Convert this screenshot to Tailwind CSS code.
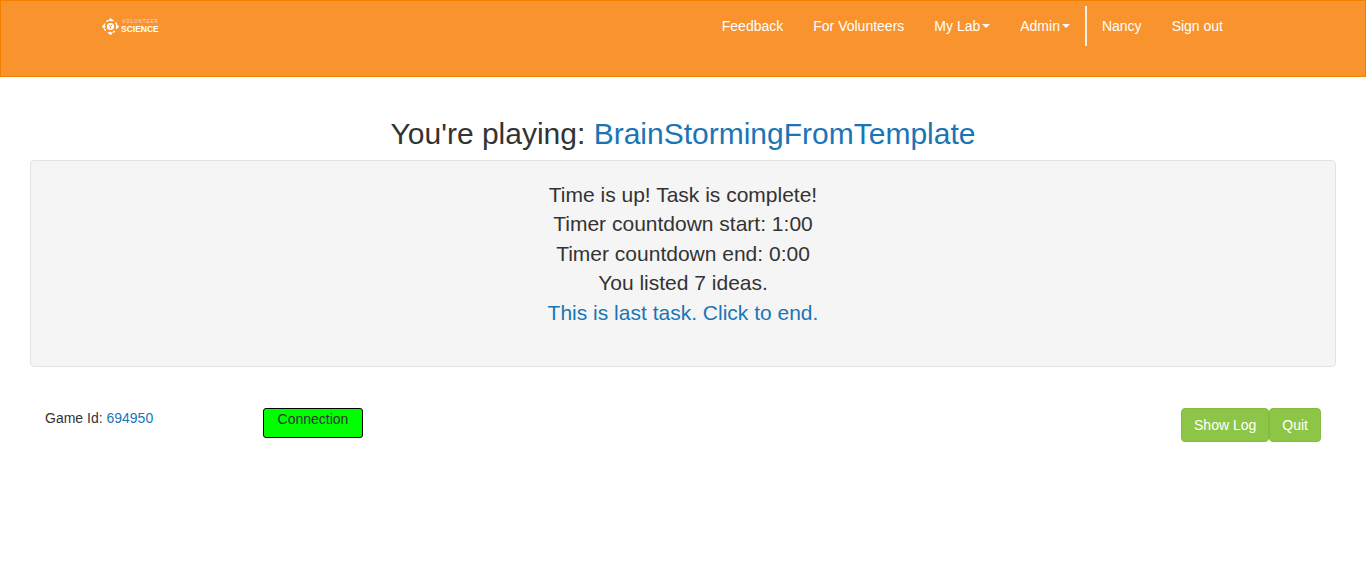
<!DOCTYPE html>
<html lang="en">
<head>
<meta charset="UTF-8">
<title>Volunteer Science</title>
<script src="https://cdn.jsdelivr.net/npm/@tailwindcss/browser@4"></script>
</head>
<body class="bg-white font-['Liberation_Sans',Arial,sans-serif] text-[14px] text-[#333]">
<nav class="h-[77px] bg-[#f8932d] border border-[#f08000] flex justify-between text-white">
  <a class="ml-[101px] mt-[14px] h-[22px] flex items-center gap-[2px]" href="#">
    <svg width="17" height="17" viewBox="0 0 17 17" fill="none">
      <circle cx="8.5" cy="8.5" r="6.4" stroke="white" stroke-width="1.4" stroke-dasharray="2.6 2.4"/>
      <circle cx="8.5" cy="8.5" r="3.6" fill="white"/>
      <path d="M6.8 6.8 8.5 8.6 10.2 6.8M8.5 8.6V10.6" stroke="#f8932d" stroke-width="1"/>
      <circle cx="8.5" cy="1.8" r="1.5" fill="white"/>
      <circle cx="8.5" cy="15.2" r="1.5" fill="white"/>
      <circle cx="1.8" cy="8.5" r="1.5" fill="white"/>
      <circle cx="15.2" cy="8.5" r="1.5" fill="white"/>
    </svg>
    <span class="flex flex-col items-end font-bold leading-none">
      <span class="text-[4.5px] leading-[6px] tracking-[1px] font-normal text-white/70">VOLUNTEER</span>
      <span class="text-[8.5px] leading-[8px]">SCIENCE</span>
    </span>
  </a>
  <div class="flex items-start mr-[127px] leading-[20px]">
    <a class="p-[15px]" href="#">Feedback</a>
    <a class="p-[15px]" href="#">For Volunteers</a>
    <a class="p-[15px] flex items-center" href="#">My Lab<span class="ml-[2px] border-x-[4px] border-t-[4px] border-x-transparent border-t-white"></span></a>
    <a class="p-[15px] flex items-center" href="#">Admin<span class="ml-[2px] border-x-[4px] border-t-[4px] border-x-transparent border-t-white"></span></a>
    <div class="flex border-l-2 border-[#f5f0e8] mt-[5px] h-[40px]">
      <a class="px-[15px] pt-[10px]" href="#">Nancy</a>
      <a class="px-[15px] pt-[10px]" href="#">Sign out</a>
    </div>
  </div>
</nav>
<main class="px-[30px]">
  <h1 class="text-[30px] leading-[33px] text-center mt-[40px] mb-[10px] text-[#333]">You're playing: <span class="text-[#1a75b5]">BrainStormingFromTemplate</span></h1>
  <section class="h-[207px] bg-[#f5f5f5] border border-[#e3e3e3] rounded-[4px] pt-[19px] text-center text-[21px] leading-[29.4px]">
    <p>Time is up! Task is complete!</p>
    <p>Timer countdown start: 1:00</p>
    <p>Timer countdown end: 0:00</p>
    <p>You listed 7 ideas.</p>
    <a class="text-[#1a75b5]" href="#">This is last task. Click to end.</a>
  </section>
  <div class="flex items-start mt-[41px] pl-[15px] pr-[15px]">
    <div class="w-[218px] leading-[20px]">Game Id: <span class="text-[#1a75b5]">694950</span></div>
    <div class="w-[100px] h-[30px] bg-[#00ff00] border border-black rounded-[3px] text-center leading-[20px] text-[#333]">Connection</div>
    <div class="ml-auto flex text-white">
      <button class="h-[34px] px-[12px] bg-[#8dc547] border border-[#84bb40] rounded-[4px]">Show Log</button>
      <button class="h-[34px] px-[12px] bg-[#8dc547] border border-[#84bb40] rounded-[4px]">Quit</button>
    </div>
  </div>
</main>
</body>
</html>
